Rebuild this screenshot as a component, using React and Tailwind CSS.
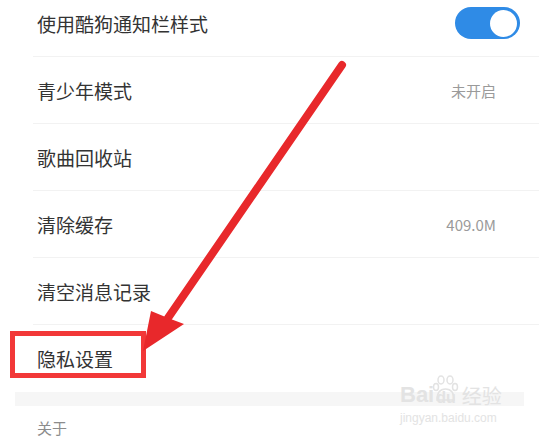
import React from "react";

const rows = [
  { label: "使用酷狗通知栏样式", toggle: true },
  { label: "青少年模式", value: "未开启" },
  { label: "歌曲回收站" },
  { label: "清除缓存", value: "409.0M" },
  { label: "清空消息记录" },
  { label: "隐私设置", last: true },
];

function Toggle() {
  return (
    <div className="absolute right-[19px] top-1/2 -translate-y-1/2 w-[65px] h-[32px] rounded-full bg-[#2f8be6] flex items-center justify-end pr-[3px]">
      <div className="w-[27px] h-[27px] rounded-full bg-white" />
    </div>
  );
}

function Row({ label, value, toggle, last }) {
  return (
    <div
      className={
        "relative h-[67px] ml-[33px] pl-[4px] pr-[43px] flex items-center justify-between " +
        (last ? "" : "border-b border-[#f2f2f2]")
      }
    >
      <span className="text-[19px] text-[#333333] leading-none">{label}</span>
      {value && <span className="text-[15px] text-[#9a9a9a] leading-none">{value}</span>}
      {toggle && <Toggle />}
    </div>
  );
}

export default function App() {
  return (
    <div
      className="relative w-[539px] h-[443px] overflow-hidden bg-white"
      style={{ fontFamily: '"Noto Sans CJK SC", "Noto Sans", sans-serif' }}
    >
      <div className="-mt-[10px]">
        {rows.map((r) => (
          <Row key={r.label} {...r} />
        ))}
        <div className="mx-[15px] h-[14px] bg-[#f6f6f6]" />
        <div className="h-[42px] pl-[37px] flex items-center">
          <span className="text-[15px] text-[#8c8c8c] leading-none">关于</span>
        </div>
      </div>

      {/* red highlight box */}
      <div className="absolute left-[10px] top-[331px] w-[136px] h-[47px] border-[5px] border-[#f23838]" />

      {/* red arrow */}
      <svg className="absolute inset-0" width="539" height="443" viewBox="0 0 539 443">
        <line x1="342" y1="65" x2="168" y2="318" stroke="#e8282b" strokeWidth="8" strokeLinecap="round" />
        <polygon points="143,351 151,311 168,318 184,324" fill="#e8282b" />
      </svg>

      {/* watermark */}
      <div className="absolute left-[400px] top-[384px] flex flex-col items-start text-[#e3e3e3] leading-none">
        <div className="flex items-end">
          <span className="text-[22px] font-bold" style={{ fontFamily: '"Liberation Sans", sans-serif' }}>Bai</span>
          <span className="relative">
            <svg width="26" height="30" viewBox="0 0 26 30" className="absolute -top-[14px] left-[-1px]">
              <g fill="none" stroke="#e3e3e3" strokeWidth="1.5">
                <ellipse cx="8" cy="6" rx="3" ry="4" />
                <ellipse cx="17" cy="6" rx="3" ry="4" />
                <ellipse cx="3" cy="13" rx="2.5" ry="3.5" />
                <ellipse cx="22" cy="13" rx="2.5" ry="3.5" />
                <path d="M4 26 C4 18 8 15 12.5 15 C17 15 21 18 21 26 Z" />
              </g>
            </svg>
            <span className="relative text-[16px] font-bold px-[2px]" style={{ fontFamily: '"Liberation Sans", sans-serif' }}>du</span>
          </span>
          <span className="text-[20px] ml-[4px]">经验</span>
        </div>
        <span className="text-[12px] mt-[6px]" style={{ fontFamily: '"Liberation Sans", sans-serif' }}>jingyan.baidu.com</span>
      </div>
    </div>
  );
}
